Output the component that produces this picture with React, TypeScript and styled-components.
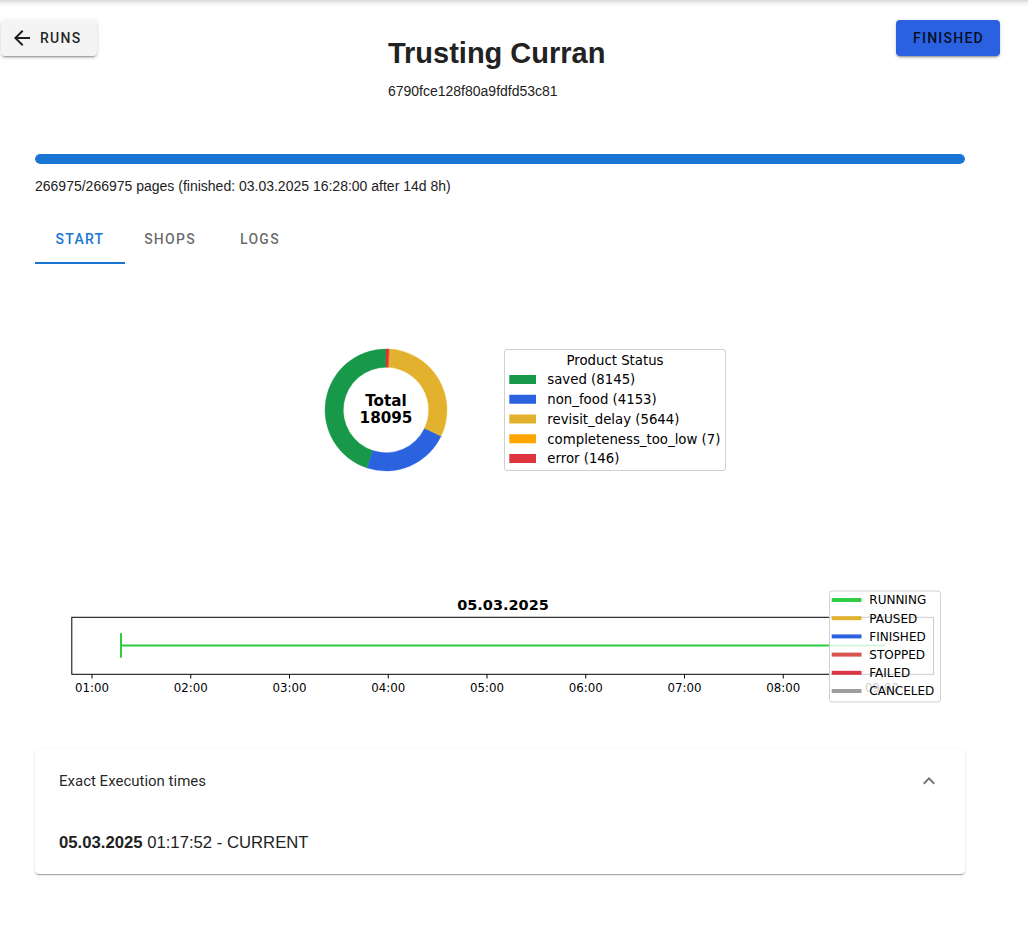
import React from 'react';
import styled, { createGlobalStyle } from 'styled-components';

const GlobalStyle = createGlobalStyle`
  html, body { margin: 0; padding: 0; }
  body {
    background: linear-gradient(to bottom, rgba(0,0,0,0.16) 0px, rgba(0,0,0,0.05) 3px, rgba(0,0,0,0) 7px) no-repeat, #fff;
    font-family: "Liberation Sans", Arial, sans-serif;
    color: rgba(0,0,0,0.87);
  }
  * { box-sizing: border-box; }
`;

const Page = styled.div`
  width: 1000px;
  padding-top: 20px;
  padding-bottom: 40px;
`;

const Header = styled.header`
  display: flex;
  justify-content: space-between;
  align-items: flex-start;
  padding-left: 1px;
`;

const Button = styled.button<{ $variant: 'grey' | 'blue' }>`
  display: inline-flex;
  align-items: center;
  gap: 6px;
  height: 36px;
  border: 0;
  border-radius: 4px;
  padding: ${(p) => (p.$variant === 'grey' ? '0 16px 0 9px' : '0 16px 0 17px')};
  background: ${(p) => (p.$variant === 'grey' ? '#f4f4f4' : '#2a61e1')};
  box-shadow: 0px 3px 1px -2px rgba(0,0,0,0.2), 0px 2px 2px 0px rgba(0,0,0,0.14), 0px 1px 5px 0px rgba(0,0,0,0.12);
  font-family: Roboto, "Liberation Sans", sans-serif;
  font-weight: 500;
  font-size: 14px;
  letter-spacing: 1.25px;
  text-transform: uppercase;
  color: rgba(0,0,0,0.87);
  cursor: pointer;
`;

const TitleBlock = styled.div`
  margin-top: 16px;
`;

const Title = styled.h1`
  margin: 0;
  font-size: 29px;
  line-height: 35px;
  font-weight: 700;
  color: #222;
`;

const Hash = styled.div`
  margin-top: 10px;
  font-size: 14px;
  line-height: 20px;
  color: #222;
`;

const Content = styled.main`
  padding: 0 35px;
`;

const ProgressTrack = styled.div`
  margin-top: 53px;
  height: 10px;
  border-radius: 5px;
  background: #cfe0f5;
  overflow: hidden;
`;

const ProgressFill = styled.div`
  height: 100%;
  background: #1976d2;
  border-radius: 5px;
`;

const ProgressText = styled.div`
  margin-top: 12px;
  font-size: 14px;
  line-height: 20px;
  color: #222;
`;

const Tabs = styled.nav`
  margin-top: 20px;
  display: flex;
`;

const Tab = styled.div<{ $active?: boolean }>`
  width: 90px;
  height: 48px;
  display: flex;
  align-items: center;
  justify-content: center;
  border-bottom: 2px solid ${(p) => (p.$active ? '#1976d2' : 'transparent')};
  font-family: Roboto, "Liberation Sans", sans-serif;
  font-weight: 500;
  font-size: 14px;
  letter-spacing: 1.25px;
  color: ${(p) => (p.$active ? '#1976d2' : 'rgba(0,0,0,0.6)')};
`;

const ChartSvg = styled.svg<{ $top: number }>`
  display: block;
  margin-top: ${(p) => p.$top}px;
  font-family: "DejaVu Sans", sans-serif;
`;

const Accordion = styled.section`
  margin-top: 34px;
  background: #fff;
  border-radius: 4px;
  box-shadow: 0px 2px 1px -1px rgba(0,0,0,0.2), 0px 1px 1px 0px rgba(0,0,0,0.14), 0px 1px 3px 0px rgba(0,0,0,0.12);
`;

const AccordionHeader = styled.div`
  height: 64px;
  display: flex;
  align-items: center;
  justify-content: space-between;
  padding: 0 24px;
  font-family: Roboto, "Liberation Sans", sans-serif;
  font-size: 15px;
  color: rgba(0,0,0,0.87);
`;

const AccordionDetails = styled.div`
  padding: 18px 24px 19px;
  font-size: 16.7px;
  line-height: 24px;
  color: #222;
`;

const slices = [
  { name: 'saved', value: 8145, color: '#18994a' },
  { name: 'non_food', value: 4153, color: '#2a62e0' },
  { name: 'revisit_delay', value: 5644, color: '#e2b22e' },
  { name: 'completeness_too_low', value: 7, color: '#ffa500' },
  { name: 'error', value: 146, color: '#dc3540' },
];

const statuses = [
  { name: 'RUNNING', color: '#2ecc40' },
  { name: 'PAUSED', color: '#e2b22e' },
  { name: 'FINISHED', color: '#2a62e0' },
  { name: 'STOPPED', color: '#d9534f' },
  { name: 'FAILED', color: '#dc3545' },
  { name: 'CANCELED', color: '#9e9e9e' },
];

const DonutChart: React.FC = () => {
  const cx = 351;
  const cy = 110;
  const R = 61;
  const r = 42.7;
  const total = slices.reduce((s, x) => s + x.value, 0);
  const rad = (d: number) => (d * Math.PI) / 180;
  const pt = (rr: number, d: number) => [cx + rr * Math.cos(rad(d)), cy - rr * Math.sin(rad(d))];
  let start = 90;
  const paths = slices.map((s) => {
    const sweep = (s.value / total) * 360;
    const a0 = start;
    const a1 = start + sweep;
    start = a1;
    const large = sweep > 180 ? 1 : 0;
    const [x0, y0] = pt(R, a0);
    const [x1, y1] = pt(R, a1);
    const [x2, y2] = pt(r, a1);
    const [x3, y3] = pt(r, a0);
    const d = `M${x0} ${y0} A${R} ${R} 0 ${large} 0 ${x1} ${y1} L${x2} ${y2} A${r} ${r} 0 ${large} 1 ${x3} ${y3} Z`;
    return <path key={s.name} d={d} fill={s.color} stroke={s.color} strokeWidth={0.4} />;
  });
  return (
    <ChartSvg $top={36} width={930} height={220} viewBox="0 0 930 220">
      {paths}
      <text x={cx} y={105.7} textAnchor="middle" fontWeight="bold" fontSize={15.2} fill="#000">Total</text>
      <text x={cx} y={123.3} textAnchor="middle" fontWeight="bold" fontSize={15.2} fill="#000">{total}</text>
      <rect x={469.5} y={49.5} width={221} height={121} rx={2.5} fill="#fff" fillOpacity={0.8} stroke="#d0d0d0" />
      <text x={580} y={65} textAnchor="middle" fontSize={13.3} fill="#000">Product Status</text>
      {slices.map((s, i) => {
        const c = 79.5 + i * 19.75;
        return (
          <g key={s.name}>
            <rect x={474.3} y={c - 4.5} width={26.7} height={9} fill={s.color} />
            <text x={512.3} y={c + 4.8} fontSize={13.3} fill="#000">{`${s.name} (${s.value})`}</text>
          </g>
        );
      })}
    </ChartSvg>
  );
};

const TimelineChart: React.FC = () => {
  const ticks = ['01:00', '02:00', '03:00', '04:00', '05:00', '06:00', '07:00', '08:00', '09:00'];
  return (
    <ChartSvg $top={65} width={930} height={130} viewBox="0 0 930 130">
      <text x={468} y={25} textAnchor="middle" fontWeight="bold" fontSize={14.5} fill="#000">05.03.2025</text>
      <rect x={36.8} y={32.3} width={861.7} height={57} fill="none" stroke="#000" strokeWidth={1} />
      {ticks.map((t, i) => {
        const x = 57 + i * 98.75;
        return (
          <g key={t}>
            <line x1={x} x2={x} y1={89.3} y2={93.5} stroke="#000" strokeWidth={1} />
            <text x={x} y={107} textAnchor="middle" fontSize={11.8} fill="#000">{t}</text>
          </g>
        );
      })}
      <line x1={86} x2={850} y1={60.5} y2={60.5} stroke="#2ecc40" strokeWidth={2} />
      <line x1={86} x2={86} y1={48.3} y2={72.7} stroke="#2ecc40" strokeWidth={2} />
      <rect x={794.5} y={6} width={111} height={111} rx={2.5} fill="#fff" fillOpacity={0.8} stroke="#d0d0d0" />
      {statuses.map((s, i) => {
        const c = 15 + i * 18.2;
        return (
          <g key={s.name}>
            <line x1={796.7} x2={826.5} y1={c} y2={c} stroke={s.color} strokeWidth={4} />
            <text x={834.3} y={c + 4.3} fontSize={12} fill="#000">{s.name}</text>
          </g>
        );
      })}
    </ChartSvg>
  );
};

const ArrowBack = () => (
  <svg width="24" height="24" viewBox="0 0 24 24" fill="currentColor">
    <path d="M20 11H7.83l5.59-5.59L12 4l-8 8 8 8 1.41-1.41L7.83 13H20v-2z" />
  </svg>
);

const ExpandLess = () => (
  <svg width="24" height="24" viewBox="0 0 24 24" fill="rgba(0,0,0,0.54)">
    <path d="M12 8l-6 6 1.41 1.41L12 10.83l4.59 4.58L18 14z" />
  </svg>
);

export default function App() {
  const done = 266975;
  const all = 266975;
  return (
    <>
      <GlobalStyle />
      <Page>
        <Header>
          <Button $variant="grey">
            <ArrowBack />
            Runs
          </Button>
          <TitleBlock>
            <Title>Trusting Curran</Title>
            <Hash>6790fce128f80a9fdfd53c81</Hash>
          </TitleBlock>
          <Button $variant="blue">Finished</Button>
        </Header>
        <Content>
          <ProgressTrack>
            <ProgressFill style={{ width: `${(done / all) * 100}%` }} />
          </ProgressTrack>
          <ProgressText>
            {done}/{all} pages (finished: 03.03.2025 16:28:00 after 14d 8h)
          </ProgressText>
          <Tabs>
            <Tab $active>START</Tab>
            <Tab>SHOPS</Tab>
            <Tab>LOGS</Tab>
          </Tabs>
          <DonutChart />
          <TimelineChart />
          <Accordion>
            <AccordionHeader>
              <span>Exact Execution times</span>
              <ExpandLess />
            </AccordionHeader>
            <AccordionDetails>
              <b>05.03.2025</b> 01:17:52 - CURRENT
            </AccordionDetails>
          </Accordion>
        </Content>
      </Page>
    </>
  );
}
